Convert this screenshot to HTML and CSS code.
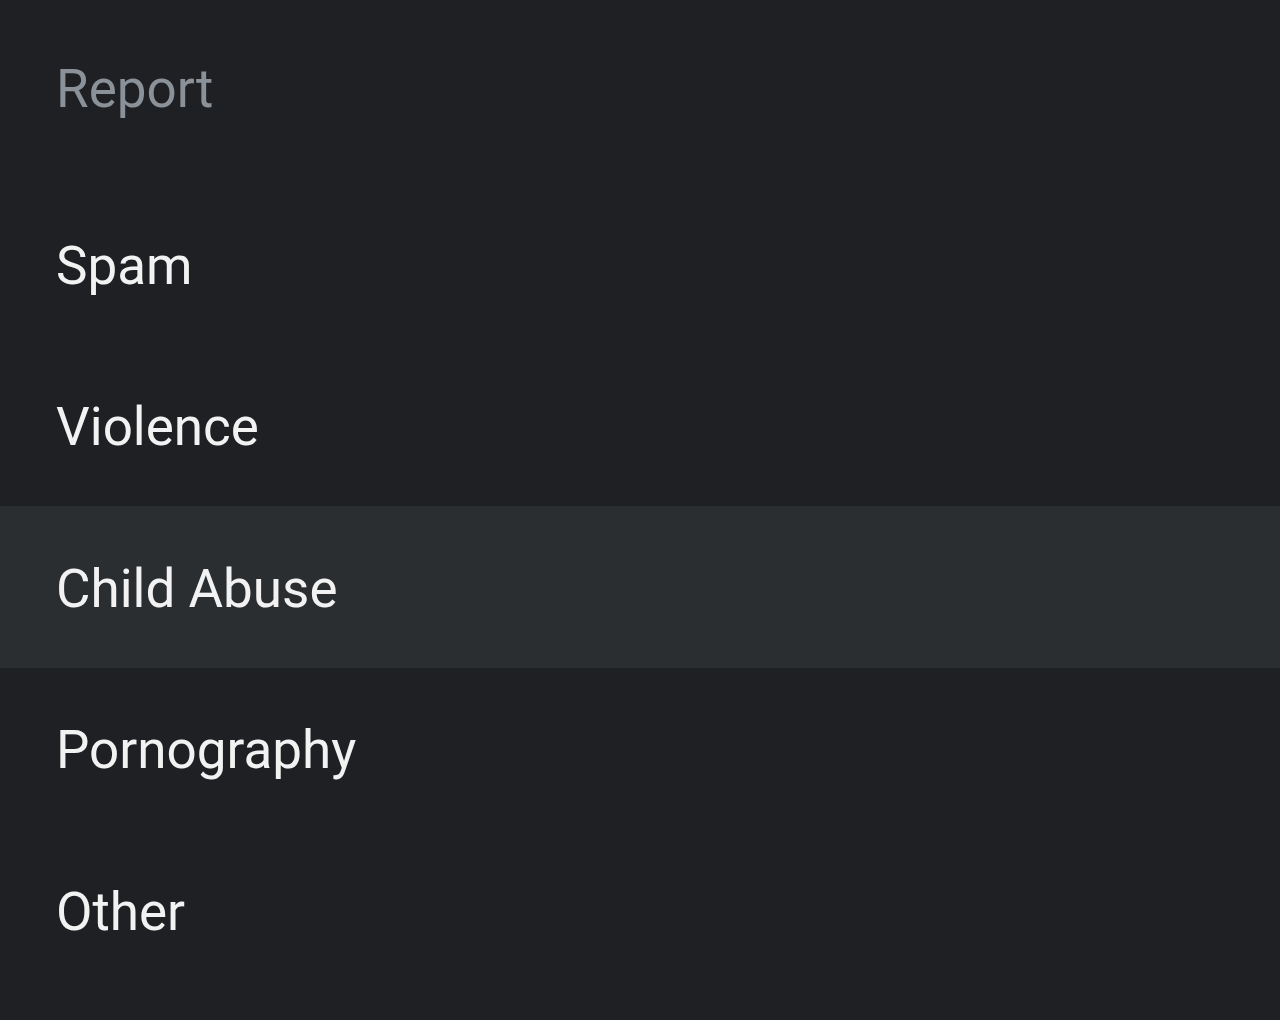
FILE: index.html
```html
<!DOCTYPE html>
<html lang="en">
<head>
<meta charset="utf-8">
<title>Report</title>
<link rel="stylesheet" href="styles.css">
</head>
<body>
<div class="sheet">
  <div class="sheet-title">Report</div>
  <ul class="options">
    <li class="option">Spam</li>
    <li class="option">Violence</li>
    <li class="option option-active">Child Abuse</li>
    <li class="option">Pornography</li>
    <li class="option">Other</li>
  </ul>
</div>
</body>
</html>
```
FILE: styles.css
```css
html, body {
  margin: 0;
  padding: 0;
  background: #1e2023;
}
body {
  font-family: Roboto, "Noto Sans", sans-serif;
  width: 1280px;
  height: 1020px;
  overflow: hidden;
}
.sheet {
  display: flex;
  flex-direction: column;
}
.sheet-title {
  height: 183px;
  box-sizing: border-box;
  padding: 63px 0 0 56px;
  font-size: 53px;
  line-height: 1;
  color: #8a9198;
}
.options {
  list-style: none;
  margin: 0;
  padding: 0;
}
.option {
  height: 161.5px;
  box-sizing: border-box;
  display: flex;
  align-items: center;
  padding: 5px 0 0 56px;
  font-size: 53px;
  line-height: 1;
  color: #f2f2f2;
}
.option-active {
  background: #2b2e31;
}
```
